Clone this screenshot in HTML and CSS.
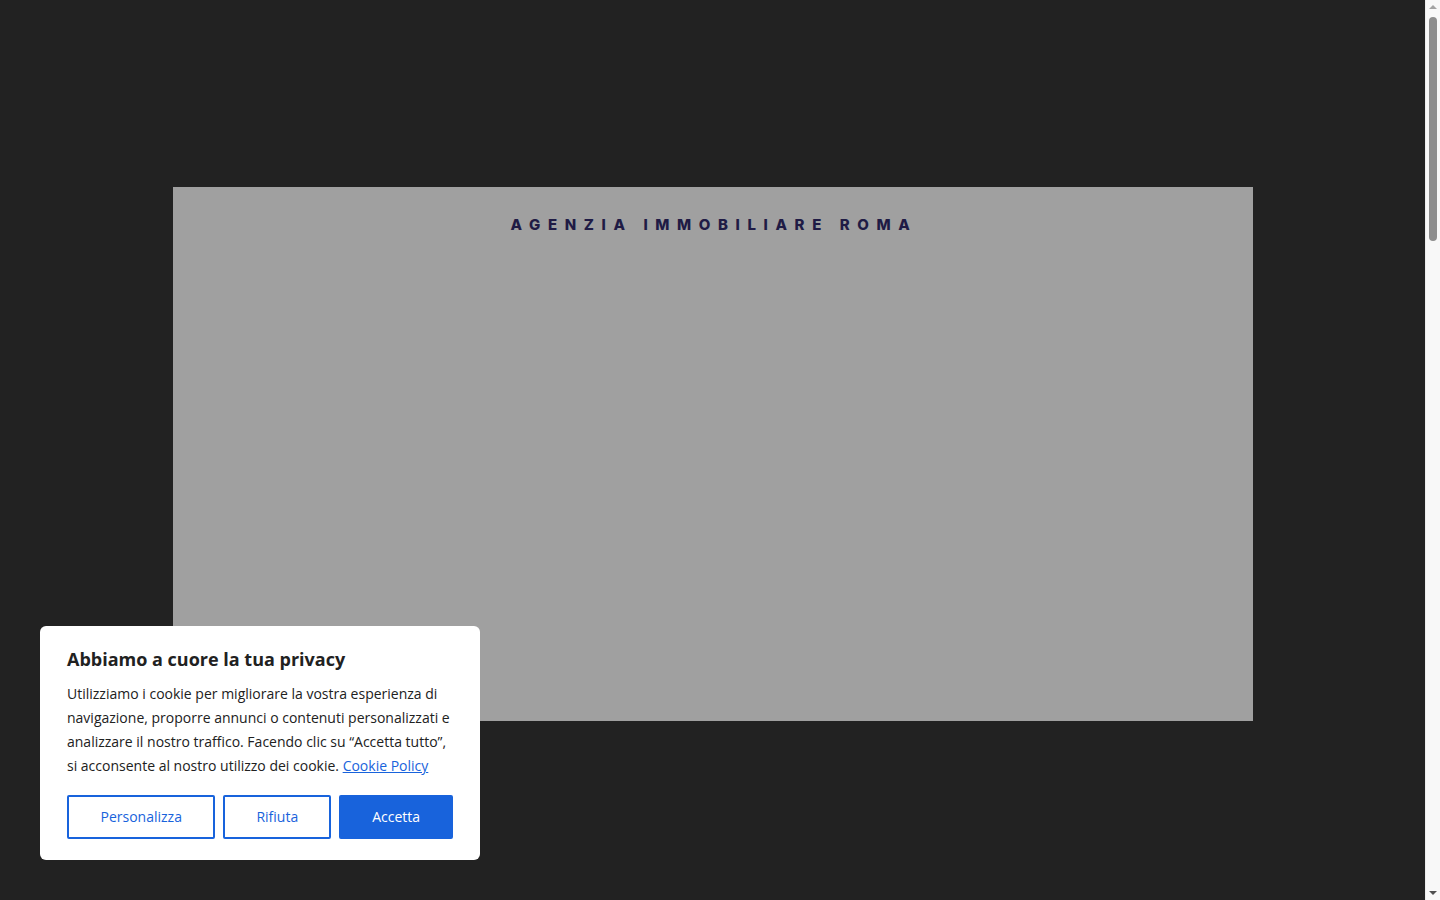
FILE: index.html
```html
<!DOCTYPE html>
<html lang="it">
<head>
<meta charset="utf-8">
<title>Agenzia Immobiliare Roma</title>
<link rel="stylesheet" href="styles.css">
</head>
<body>
<main class="page">
  <section class="hero">
    <h1 class="hero-title">AGENZIA IMMOBILIARE ROMA</h1>
  </section>
</main>

<div class="scrollbar" aria-hidden="true">
  <span class="sb-arrow sb-up"></span>
  <span class="sb-thumb"></span>
  <span class="sb-arrow sb-down"></span>
</div>

<div class="cookie">
  <h2 class="cookie-title">Abbiamo a cuore la tua privacy</h2>
  <p class="cookie-text">Utilizziamo i cookie per migliorare la vostra esperienza di navigazione, proporre annunci o contenuti personalizzati e analizzare il nostro traffico. Facendo clic su “Accetta tutto”, si acconsente al nostro utilizzo dei cookie. <a href="#" class="cookie-link">Cookie Policy</a></p>
  <div class="cookie-actions">
    <button class="btn btn-outline btn-wide">Personalizza</button>
    <button class="btn btn-outline">Rifiuta</button>
    <button class="btn btn-primary">Accetta</button>
  </div>
</div>
</body>
</html>
```

FILE: styles.css
```css
html, body {
  margin: 0;
  padding: 0;
}
body {
  background: #222222;
  font-family: "Open Sans", "Liberation Sans", sans-serif;
}
.page {
  width: 1425px;
  min-height: 3500px;
  padding-top: 187px;
  box-sizing: border-box;
  display: flex;
  flex-direction: column;
  align-items: center;
}
.hero {
  width: 1080px;
  height: 534px;
  margin-left: 1px;
  background: #a0a0a0;
  box-sizing: border-box;
  padding-top: 28px;
  display: flex;
  justify-content: center;
}
.hero-title {
  margin: 0;
  font-family: Inter, "Liberation Sans", sans-serif;
  font-weight: 800;
  font-size: 15px;
  line-height: 20px;
  letter-spacing: 7.6px;
  color: #1f1b45;
  padding-left: 2px;
  height: 20px;
}

/* simulated browser scrollbar */
.scrollbar {
  position: fixed;
  top: 0;
  right: 0;
  width: 15px;
  height: 100%;
  background: #f8f8f8;
  border-left: 1px solid #ececec;
  box-sizing: border-box;
}
.sb-thumb {
  position: absolute;
  left: 3px;
  top: 17px;
  width: 8px;
  height: 224px;
  border-radius: 4px;
  background: #8d8d8d;
}
.sb-arrow {
  position: absolute;
  left: 3px;
  width: 0;
  height: 0;
  border-left: 4px solid transparent;
  border-right: 4px solid transparent;
}
.sb-up {
  top: 5px;
  border-bottom: 4px solid #a3a3a3;
}
.sb-down {
  bottom: 5px;
  border-top: 4px solid #505050;
}

.cookie {
  position: fixed;
  left: 40px;
  bottom: 40px;
  width: 440px;
  box-sizing: border-box;
  background: #ffffff;
  border-radius: 6px;
  padding: 21px 27px 21px;
}
.cookie-title {
  margin: 0 0 11px;
  font-size: 18px;
  line-height: 24px;
  font-weight: 700;
  color: #212121;
}
.cookie-text {
  margin: 0 0 17px;
  font-size: 14px;
  line-height: 24px;
  color: #212121;
}
.cookie-link {
  color: #1863dc;
  text-decoration: underline;
}
.cookie-actions {
  display: flex;
  gap: 8px;
}
.btn {
  height: 44px;
  box-sizing: border-box;
  border: 2px solid #1863dc;
  border-radius: 2px;
  font-family: "Open Sans", "Liberation Sans", sans-serif;
  font-size: 14px;
  padding: 0 31px 1px;
  cursor: pointer;
}
.btn-wide {
  padding: 0 31.5px 1px;
}
.btn-outline {
  background: #ffffff;
  color: #1863dc;
}
.btn-primary {
  background: #1863dc;
  color: #ffffff;
}
```
